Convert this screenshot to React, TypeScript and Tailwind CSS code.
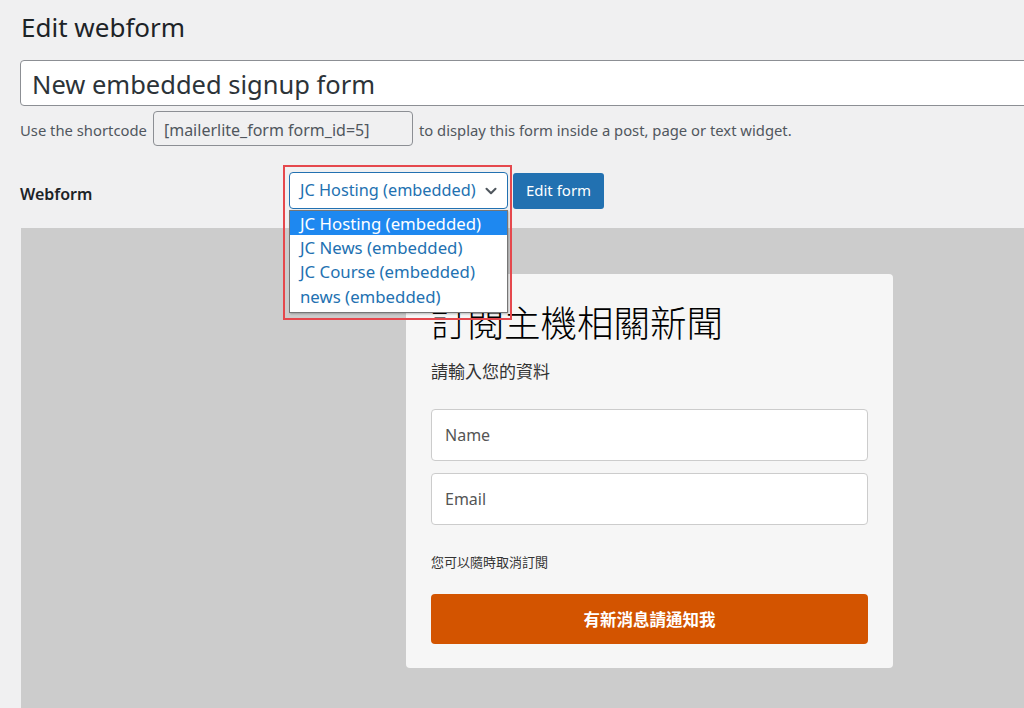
import { ChevronDown } from "lucide-react";

const ui = "font-['Segoe_UI','Noto_Sans','Noto_Sans_CJK_TC',sans-serif]";
const cjk = "font-['Noto_Sans_CJK_TC','Noto_Sans',sans-serif]";

const options = ["JC Hosting (embedded)", "JC News (embedded)", "JC Course (embedded)", "news (embedded)"];

export default function App() {
  return (
    <div className={`${ui} w-[1024px] h-[708px] overflow-hidden bg-[#f0f0f1] text-[#1d2327]`}>
      <div className="pl-[20px] pt-[8px]">
        {/* heading */}
        <h1 className="text-[26px] leading-[38px] font-normal pl-px">Edit webform</h1>

        {/* title */}
        <div className="mt-[14px] h-[46px] w-[1020px] rounded-[4px] border border-[#8c8f94] bg-white pl-[11px] pt-[3px] flex items-center text-[25.5px] text-[#2c3338]">
          New embedded signup form
        </div>

        {/* shortcode */}
        <div className="mt-[5px] flex items-center text-[14.8px] text-[#50575e]">
          <span className="pt-[3px]">Use the shortcode</span>
          <div className="ml-[6px] h-[35px] w-[260px] rounded-[4px] border border-[#8c8f94] bg-[#f0f0f1] pl-[10px] pt-[2px] flex items-center text-[16px] text-[#50575e]">
            [mailerlite_form form_id=5]
          </div>
          <span className="ml-[6px] pt-[3px]">to display this form inside a post, page or text widget.</span>
        </div>

        {/* webform row */}
        <div className="mt-[26px] flex items-center h-[37px]">
          <div className="w-[269px] text-[16px] font-semibold text-[#1d2327] pt-[6px]">Webform</div>
          <div className="relative">
            <div className="h-[37px] w-[219px] rounded-[4px] border border-[#2271b1] bg-white pl-[10px] pr-[7px] flex items-center justify-between text-[16.3px] text-[#2271b1]">
              <span>JC Hosting (embedded)</span>
              <ChevronDown className="w-[18px] h-[18px] text-[#50575e]" strokeWidth={2.75} />
            </div>
            {/* open list */}
            <div className="absolute left-0 top-[38px] w-[219px] border border-[#767676] bg-white shadow-[1px_1px_2px_rgba(0,0,0,0.25)] z-10 pb-[3px]">
              {options.map((o, i) => (
                <div
                  key={o}
                  className={`h-[24.4px] pl-[10px] flex items-center text-[16.8px] ${i === 0 ? "bg-[#1e88f0] text-white" : "text-[#2271b1]"}`}
                >
                  {o}
                </div>
              ))}
            </div>
            {/* highlight */}
            <div className="absolute -left-[6px] -top-[7px] w-[229px] h-[155px] border-2 border-[#e5484d] z-20 pointer-events-none" />
          </div>
          <button className="ml-[5px] h-[36px] w-[91px] rounded-[3px] bg-[#2271b1] text-white text-[15px]">Edit form</button>
        </div>

        {/* preview */}
        <div className="mt-[19px] ml-px h-[500px] bg-[#cccccc] pt-[46px] pl-[385px]">
          <div className="w-[487px] rounded-[4px] bg-[#f6f6f6] px-[25px] pt-[22px] pb-[24px]">
            <h2 className={`${cjk} text-[36.5px] leading-[52px] font-light text-black`}>訂閱主機相關新聞</h2>
            <p className={`${cjk} mt-[10px] text-[17px] text-[#333]`}>請輸入您的資料</p>
            <div className="mt-[25px] h-[52px] rounded-[4px] border border-[#cccccc] bg-white pl-[13px] flex items-center text-[16px] text-[#555]">Name</div>
            <div className="mt-[12px] h-[52px] rounded-[4px] border border-[#cccccc] bg-white pl-[13px] flex items-center text-[16px] text-[#555]">Email</div>
            <p className={`${cjk} mt-[27px] text-[13px] text-[#333]`}>您可以隨時取消訂閱</p>
            <button className={`${cjk} mt-[23px] h-[50px] w-full rounded-[4px] bg-[#d35400] text-white text-[16.5px] font-bold`}>有新消息請通知我</button>
          </div>
        </div>
      </div>
    </div>
  );
}
